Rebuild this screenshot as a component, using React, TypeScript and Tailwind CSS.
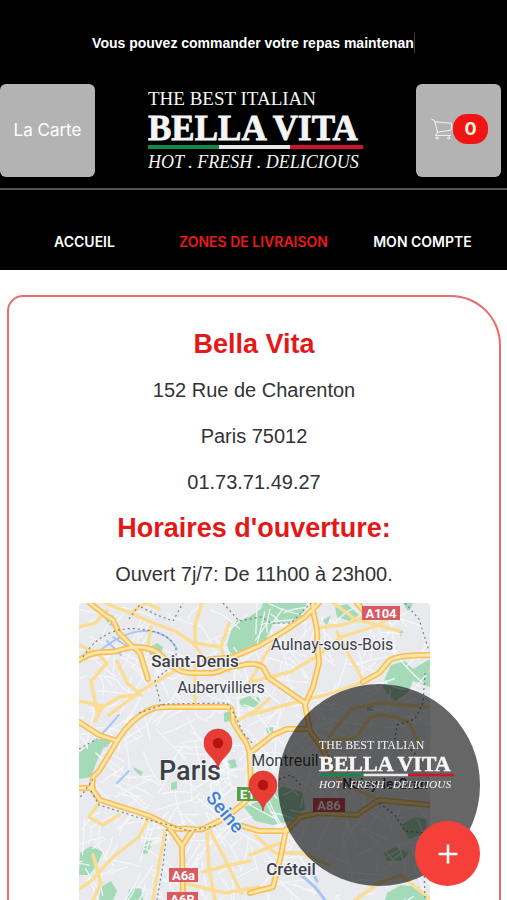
import { Fragment } from "react";

const NAV_LINKS = [
  { label: "ACCUEIL", active: false },
  { label: "ZONES DE LIVRAISON", active: true },
  { label: "MON COMPTE", active: false },
];

const PARKS = [
  "M148 42L152 28L158 17L170 14L182 6L184 0H228L222 14L208 20L194 21L186 38L178 42L166 50L152 53Z",
  "M25 14L34 12L38 24L30 22Z",
  "M68 46L78 40L84 44L82 50L72 52Z",
  "M158 98L172 92L184 96L176 104L164 104Z",
  "M145 110L151 107L152 118L145 119Z",
  "M256 4L268 1L280 12L270 18L258 14Z",
  "M303 82L312 62L326 58L334 66L351 56V84L334 78L328 92L316 98L308 90Z",
  "M243 18L252 12L248 22Z",
  "M0 150L10 142H26L18 158L12 174L0 176Z",
  "M6 146L16 136L34 136L28 144Z",
  "M148 158L156 156L158 164L150 166Z",
  "M92 180L98 178L98 186L92 187Z",
  "M54 164L64 169L62 173L56 168Z",
  "M64 242L70 237L74 239L68 251L62 250Z",
  "M1 250L12 243L24 249L18 262L10 272L0 272Z",
  "M22 284L32 278L38 288L34 297H20Z",
  "M50 286L62 285L64 297H48Z",
  "M165 204L180 198L196 188L206 182L224 190L226 206L212 218L194 222L176 218Z",
  "M322 222L336 214L348 216L346 230L330 236Z",
  "M305 250L316 244L330 250L322 258L308 258Z",
  "M308 290L322 282L340 284L348 297H306Z",
  "M288 103L294 102L294 108L288 108Z",
  "M187 125L194 124L194 131L188 130Z",
  "M318 26L324 28L322 34Z",
  "M324 0H334L330 10Z",
];

const MAJOR_ROADS = [
  "M34 145C41 132 50 120 62 112S78 104 90 104H148C155 104 153 112 154 119L162 132C168 140 171 146 171 158L172 186C172 198 160 203 148 214L124 226C115 228 110 224 101 226C90 226 78 215 68 212L21 197L13 186L14 174L20 168L34 145",
  "M0 57C20 44 30 52 41 47C56 42 74 43 84 54S100 69 112 70H130C142 71 146 62 160 63C170 60 176 60 184 64L190 75L226 100",
  "M11 0L26 12L34 17L40 30L52 42L61 50L69 76",
  "M126 57L154 54L180 43L204 29L226 14L240 0",
  "M234 0C232 10 240 22 238 38L240 60L234 84L226 102L231 128L244 146L250 160",
  "M351 52C332 52 318 53 311 57L300 70L284 79",
  "M0 185H14",
  "M171 150L194 132L208 126H230",
  "M91 226L103 243L104 297M114 226L103 243",
  "M160 222L180 228H208L221 214L240 210L278 212L300 197L351 202",
  "M171 290L194 284L202 252L207 226",
  "M0 119L20 132L38 138",
  "M278 0L290 14",
];

const MINOR_ROADS = [
  "M26 0L51 10L74 20L96 28L114 40L126 56",
  "M51 10L67 0L80 6",
  "M72 24L68 48",
  "M123 0L116 22L116 38",
  "M114 40L142 44L150 68",
  "M0 42L18 50L28 60L12 78L18 108",
  "M116 60V104",
  "M30 112L62 88L92 70L108 61",
  "M18 108L40 94L58 92",
  "M38 58L48 80L62 92",
  "M0 98L24 103L16 118",
  "M0 24L16 20L28 8",
  "M171 79L211 69L240 52L262 34L300 22L320 8",
  "M238 25L268 21L282 15",
  "M171 112L214 100L250 91L284 79",
  "M258 29L270 52L284 77",
  "M254 0L276 16L320 28",
  "M150 20L142 44",
  "M154 120L176 108L190 96",
  "M170 80L190 46L204 28",
  "M128 230L130 265L136 297",
  "M131 228L146 256L162 290",
  "M86 228L80 262L74 297",
  "M70 214L60 234L34 254L12 278L0 286",
  "M124 269L150 262L171 258",
  "M104 280L146 290L180 284",
  "M14 252L22 280L14 297",
  "M20 200L10 214L24 222L40 212",
  "M171 252L201 240",
  "M176 232L196 250L222 250L250 262",
  "M248 155C246 140 256 134 268 136S284 122 290 116S318 112 330 120L340 140",
  "M250 134L272 106L300 100L351 104",
  "M276 297L300 280L322 272L351 296",
  "M232 130L262 180L300 197",
];

const BORDERS = [
  "M4 54C20 28 44 24 60 26C84 28 98 38 97 50C98 64 84 68 76 78L82 102",
  "M50 16L62 0M62 4L78 12L94 18L104 0",
  "M60 110L86 101L148 100L156 112L164 130L175 142",
  "M144 0L160 18L182 14L192 20H212L232 0",
  "M12 188L20 202L58 214L90 222L110 228L140 222",
  "M88 226L84 262L78 297",
  "M326 0L340 16L350 48",
  "M346 70L344 100L336 116L318 122L316 136L330 144L344 160",
  "M14 176L0 196M0 146L18 136",
  "M195 178L212 172L224 184",
  "M300 200L316 212L326 228L344 230L346 297",
];

const TOWNS = [
  { name: "Saint-Denis", x: 116, y: 64, className: "text-[17px] font-medium" },
  { name: "Aubervilliers", x: 142, y: 90, className: "text-[16px]" },
  { name: "Aulnay-sous-Bois", x: 253, y: 47, className: "text-[16px]" },
  { name: "Paris", x: 111, y: 177, className: "text-[27px] font-medium" },
  { name: "Montreuil", x: 206, y: 163, className: "text-[16px]" },
  { name: "Noisy-le-Gran", x: 306, y: 186, className: "text-[14px] font-medium" },
  { name: "Créteil", x: 212, y: 272, className: "text-[17px] font-medium" },
];

const SHIELDS = [
  { name: "A104", x: 283, y: 3, width: 38, color: "#db5a62" },
  { name: "A86", x: 234, y: 195, width: 32, color: "#db4a52" },
  { name: "A6a", x: 90, y: 265, width: 29, color: "#db5a62" },
  { name: "A6B", x: 88, y: 289, width: 31, color: "#db5a62" },
  { name: "E15", x: 158, y: 184, width: 28, color: "#5b9e42" },
];

// Small side streets, spread over the map by a fixed seed
function makeStreets(count: number) {
  let seed = 11;
  const next = () => {
    seed = (seed * 16807) % 2147483647;
    return seed / 2147483647;
  };
  return Array.from({ length: count }, () => {
    const x = next() * 351;
    const y = next() * 297;
    const angle = next() * Math.PI;
    const length = 14 + next() * 28;
    const dx = Math.cos(angle) * length;
    const dy = Math.sin(angle) * length;
    return `M${x} ${y}q${dx / 2 + next() * 10 - 5} ${dy / 2 + next() * 10 - 5} ${dx} ${dy}`;
  }).join("");
}

const STREETS = makeStreets(480);

function Logo({ className }: { className?: string }) {
  return (
    <svg viewBox="0 0 215 85" className={className} role="img" aria-label="Bella Vita" fill="#f5f5f5">
      <g className="font-['Liberation_Serif',serif]">
        <text x="0" y="17" className="text-[19px]">THE BEST ITALIAN</text>
        <text x="0" y="52" className="text-[35px] font-bold" stroke="#f5f5f5" strokeWidth="0.8">BELLA VITA</text>
        <text x="0" y="80" className="text-[18px] italic">HOT . FRESH . DELICIOUS</text>
      </g>
      <path d="M0 57h71v4H0z" fill="#138a4b" />
      <path d="M71 57h71v4H71z" fill="#e8e8e8" />
      <path d="M142 57h73v4h-73z" fill="#d0142c" />
    </svg>
  );
}

function CartIcon() {
  return (
    <svg viewBox="0 0 22 22" className="h-[22px] w-[22px]" fill="none" stroke="#f3f3f3" strokeWidth="1" strokeLinecap="round" strokeLinejoin="round">
      <path d="M0.7 1.2L3.6 2.6L6.6 14.4L4.4 17.4H19.6" />
      <path d="M4 3.8L20.7 5.4L20.2 12L6.4 14.3" />
      <circle cx="6" cy="20" r="1.1" />
      <circle cx="17.7" cy="20" r="1.1" />
    </svg>
  );
}

function Pin({ x, y }: { x: number; y: number }) {
  return (
    <g transform={`translate(${x} ${y})`}>
      <path d="M0 26C-1 15-14 12-14 0A14 14 0 0 1 14 0C14 12 1 15 0 26Z" fill="#e83d34" stroke="#cf2e28" strokeWidth="0.6" />
      <circle r="5.2" fill="#b31412" />
    </g>
  );
}

function DeliveryMap() {
  return (
    <svg
      viewBox="0 0 351 297"
      preserveAspectRatio="xMidYMin slice"
      className="h-[297px] w-[351px] max-w-full rounded-t"
      role="img"
      aria-label="Carte des zones de livraison"
    >
      <rect width="351" height="297" fill="#e8eaee" />
      <path d={PARKS.join("")} fill="#a5dab9" />
      <g fill="none" strokeLinecap="round" strokeLinejoin="round">
        <path d={STREETS} stroke="#f6f7fa" strokeWidth="1.2" />
        <path d="M18 50Q44 28 66 28T98 46M28 38L42 52M34 34L52 46M24 130L40 112M38 180L50 168" stroke="#a9c6f5" strokeWidth="2" />
        <path d="M222 272L236 284L246 297M230 262L238 278" stroke="#a9c6f5" strokeWidth="3" />
        <path d={MINOR_ROADS.join("")} stroke="#fbdc93" strokeWidth="3.4" />
        <path d={MAJOR_ROADS.join("")} stroke="#f8bd57" strokeWidth="6" />
        <path d={MAJOR_ROADS.join("")} stroke="#fde6a6" strokeWidth="2.8" />
        <path d={BORDERS.join("")} stroke="#77808c" strokeWidth="1.2" strokeDasharray="2 3" strokeLinecap="butt" />
      </g>
      {SHIELDS.map((shield) => (
        <Fragment key={shield.name}>
          <rect x={shield.x} y={shield.y} width={shield.width} height="14" fill={shield.color} />
          <text x={shield.x + shield.width / 2} y={shield.y + 12} textAnchor="middle" fill="#fff" className="font-['Roboto',sans-serif] text-[13px] font-bold">
            {shield.name}
          </text>
        </Fragment>
      ))}
      <g className="font-['Roboto',sans-serif]" textAnchor="middle" fill="#3c4048" stroke="#f4f5f7" strokeWidth="2" paintOrder="stroke">
        {TOWNS.map((town) => (
          <text key={town.name} x={town.x} y={town.y} className={town.className}>
            {town.name}
          </text>
        ))}
        <text transform="translate(145 210) rotate(50)" y="5" fill="#4280d6" className="text-[19px] font-medium">
          Seine
        </text>
      </g>
      <Pin x={139} y={140} />
      <Pin x={184} y={182} />
    </svg>
  );
}

function Header() {
  return (
    <header className="bg-black text-white">
      <div className="flex h-[84px] items-center justify-center pt-0.5">
        <p className="border-r border-neutral-700 font-['Liberation_Sans',Arial,sans-serif] text-sm font-bold">
          Vous pouvez commander votre repas maintenan
        </p>
      </div>
      <div className="flex items-center justify-between border-b-2 border-[#555] pb-[11px] pr-[6px] font-['Inter',sans-serif]">
        <button className="h-[93px] w-[95px] rounded-md bg-[#b3b3b3] text-[17px]">La Carte</button>
        <Logo className="h-[85px] w-[215px]" />
        <button aria-label="Panier" className="flex h-[93px] w-[85px] items-center justify-center rounded-md bg-[#b3b3b3] pb-1 pl-0.5">
          <CartIcon />
          <span className="flex h-[30px] w-[35px] items-center justify-center rounded-[14px] bg-[#f01414] text-lg font-bold text-[#fff5dc]">
            0
          </span>
        </button>
      </div>
      <nav className="grid h-20 grid-cols-3 items-center pt-6 text-center font-['Inter',sans-serif] text-sm font-semibold">
        {NAV_LINKS.map((link) => (
          <a key={link.label} href="#" className={link.active ? "text-[#f01818]" : "text-white"}>
            {link.label}
          </a>
        ))}
      </nav>
    </header>
  );
}

function ContactCard() {
  return (
    <section className="ml-[7px] mr-[6px] mt-[25px] flex flex-1 flex-col items-center rounded-tl-2xl rounded-tr-[50px] border-2 border-b-0 border-[#ea6b6b] pt-6 text-center font-['Liberation_Sans',Arial,sans-serif] text-xl leading-[46px] text-[#333]">
      <h1 className="text-[27px] font-bold text-[#e51818]">Bella Vita</h1>
      <p>152 Rue de Charenton</p>
      <p>Paris 75012</p>
      <p>01.73.71.49.27</p>
      <h2 className="text-[27px] font-bold text-[#e51818]">Horaires d'ouverture:</h2>
      <p className="mb-[6px]">Ouvert 7j/7: De 11h00 à 23h00.</p>
      <DeliveryMap />
    </section>
  );
}

function FloatingOrder() {
  return (
    <div className="fixed bottom-[14px] right-[27px] h-[202px] w-[202px] rounded-full bg-black/60 pl-[41px] pt-[54px]">
      <Logo className="w-[135px]" />
      <button aria-label="Ajouter" className="absolute bottom-0 right-0 flex h-[65px] w-[65px] items-center justify-center rounded-full bg-[#f44039]">
        <svg viewBox="0 0 20 20" className="h-5 w-5" stroke="#fff" strokeWidth="2.6">
          <path d="M10 0.5V19.5M0.5 10H19.5" />
        </svg>
      </button>
    </div>
  );
}

export default function App() {
  return (
    <div className="flex min-h-screen flex-col bg-white">
      <Header />
      <ContactCard />
      <FloatingOrder />
    </div>
  );
}
